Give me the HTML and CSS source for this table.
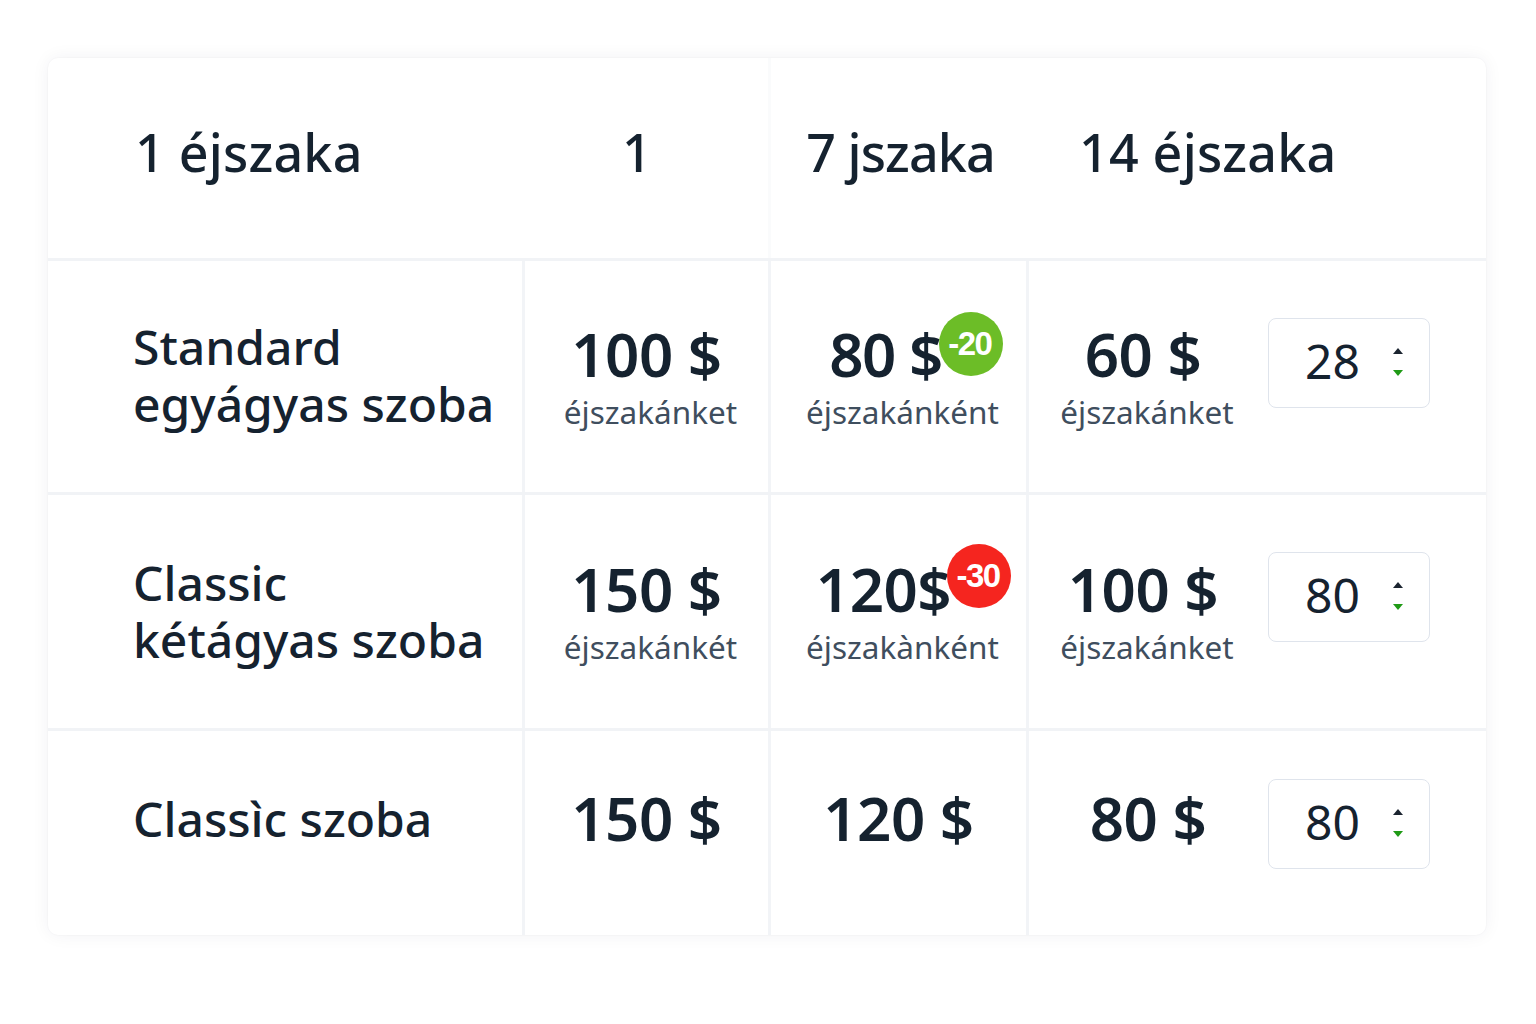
FILE: index.html
```html
<!DOCTYPE html>
<html lang="hu">
<head>
<meta charset="utf-8">
<title>Árak</title>
<link rel="stylesheet" href="styles.css">
</head>
<body>
<div class="page">
  <div class="card">
    <div class="row head">
      <div class="cell c1 hcell">1 éjszaka</div>
      <div class="cell c2 hcell center">1</div>
      <div class="cell c3 hcell center bl">7 jszaka</div>
      <div class="cell c4 hcell">14 éjszaka</div>
    </div>
    <div class="row r1">
      <div class="cell c1 name">Standard<br>egyágyas szoba</div>
      <div class="cell c2 bl center"><div class="price"><span class="amt">100 $</span><span class="per">éjszakánket</span></div></div>
      <div class="cell c3 bl center"><div class="price"><span class="amt amt-b">80 $<span class="badge green">-20</span></span><span class="per">éjszakánként</span></div></div>
      <div class="cell c4 bl last"><div class="price"><span class="amt">60 $</span><span class="per">éjszakánket</span></div><div class="stepper"><span class="val">28</span><span class="arrows"><i class="up"></i><i class="down"></i></span></div></div>
    </div>
    <div class="row r2">
      <div class="cell c1 name">Classic<br>kétágyas szoba</div>
      <div class="cell c2 bl center"><div class="price"><span class="amt">150 $</span><span class="per">éjszakánkét</span></div></div>
      <div class="cell c3 bl center"><div class="price"><span class="amt amt-b">120$<span class="badge red">-30</span></span><span class="per">éjszakànként</span></div></div>
      <div class="cell c4 bl last"><div class="price"><span class="amt">100 $</span><span class="per">éjszakánket</span></div><div class="stepper"><span class="val">80</span><span class="arrows"><i class="up"></i><i class="down"></i></span></div></div>
    </div>
    <div class="row r3">
      <div class="cell c1 name">Classìc szoba</div>
      <div class="cell c2 bl center"><div class="price"><span class="amt">150 $</span></div></div>
      <div class="cell c3 bl center"><div class="price"><span class="amt">120 $</span></div></div>
      <div class="cell c4 bl last"><div class="price p3"><span class="amt">80 $</span></div><div class="stepper"><span class="val">80</span><span class="arrows"><i class="up"></i><i class="down"></i></span></div></div>
    </div>
  </div>
</div>
</body>
</html>
```
FILE: styles.css
```css
* { box-sizing: border-box; }
html, body { margin: 0; padding: 0; }
body {
  background: #ffffff;
  font-family: "Noto Sans", "Open Sans", sans-serif;
  color: #15222f;
  width: 1536px;
  height: 1024px;
  overflow: hidden;
}
.page {
  padding: 58px 50px 0 48px;
}
.card {
  width: 1438px;
  background: #fff;
  border-radius: 10px;
  box-shadow: 0 0 18px rgba(30, 40, 60, 0.06), 0 0 2px rgba(30, 40, 60, 0.05);
  overflow: hidden;
}
.row {
  display: grid;
  grid-template-columns: 474px 246px 258px 460px;
}
.row + .row { border-top: 3px solid #f1f3f6; }
.head { height: 200px; }
.r1 { height: 234px; }
.r2 { height: 236px; }
.r3 { height: 207px; }
.cell {
  display: flex;
  align-items: center;
}
.bl { border-left: 3px solid #f2f4f7; }
.head .bl { border-left-color: #fafbfc; }
.center { justify-content: center; }
.hcell {
  font-size: 52px;
  font-weight: 500;
  letter-spacing: 0.2px;
  padding-bottom: 14px;
}
.head .c1 { padding-left: 87px; }
.head .c2 { padding-left: 0; justify-content: center; padding-right: 16px; }
.head .c3 { padding-left: 4px; padding-right: 0; letter-spacing: -0.9px; }
.head .c4 { padding-left: 53px; }
.name {
  padding-left: 85px;
  font-size: 48px;
  font-weight: 500;
  line-height: 57px;
  padding-bottom: 4px;
}
.r2 .name { padding-bottom: 4px; padding-top: 2px; }
.r3 .name { padding-bottom: 30px; }
.price {
  display: flex;
  flex-direction: column;
  align-items: center;
}
.r3 .price { padding-bottom: 30px; }
.amt {
  position: relative;
  font-size: 60px;
  font-weight: 600;
  line-height: 60px;
  letter-spacing: -0.5px;
}
.per {
  font-size: 31.5px;
  color: #3f4e5e;
  line-height: 36px;
  margin-top: 10px;
  padding-left: 8px;
}
.badge {
  position: absolute;
  width: 64px;
  height: 64px;
  border-radius: 50%;
  color: #fff;
  font-size: 33px;
  letter-spacing: -1.5px;
  display: flex;
  align-items: center;
  justify-content: center;
  line-height: 1;
  font-family: "Liberation Sans", "Noto Sans", sans-serif;
  font-weight: 700;
  padding-right: 2px;
}
.green { background: #6cbd27; top: -12px; right: -61px; }
.red { background: #f5251f; top: -15px; right: -60px; }
.r1 .c3 .amt-b { margin-right: 26px; letter-spacing: -1.5px; }
.r2 .c3 .amt-b { margin-right: 30px; }
.last {
  padding-left: 27px;
  gap: 38px;
}
.last .price { width: 174px; }
.r3 .last .price { padding-left: 10px; }
.stepper {
  width: 162px;
  height: 90px;
  border: 1.5px solid #dfe4ec;
  border-radius: 8px;
  display: flex;
  align-items: center;
  margin-bottom: 28px;
}
.r2 .stepper { margin-bottom: 30px; }
.r3 .stepper { margin-bottom: 18px; }
.val {
  font-size: 48px;
  font-weight: 400;
  margin-left: 36px;
  width: 88px;
  line-height: 1;
  padding-bottom: 4px;
}
.arrows {
  display: flex;
  flex-direction: column;
  gap: 16px;
  margin-top: -2px;
}
.arrows i {
  width: 0; height: 0;
  border-left: 5px solid transparent;
  border-right: 5px solid transparent;
}
.up { border-bottom: 6px solid #1b2430; }
.down { border-top: 6px solid #1f9a16; }
```
